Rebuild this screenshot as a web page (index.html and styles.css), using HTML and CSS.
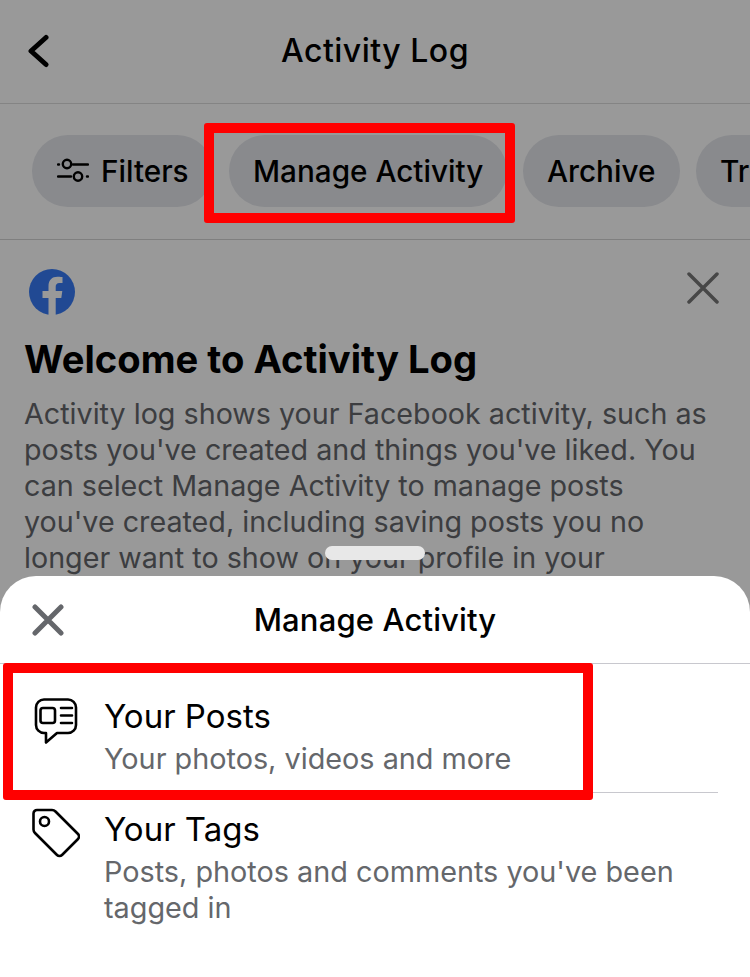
FILE: index.html
```html
<!DOCTYPE html>
<html lang="en">
<head>
<meta charset="utf-8">
<title>Activity Log</title>
<link rel="stylesheet" href="styles.css">
</head>
<body>
<div class="page">
  <header class="topbar">
    <svg class="back" width="26" height="34" viewBox="0 0 26 34"><path d="M21 3.500 L6 17 L21 30.500" fill="none" stroke="#000" stroke-width="5" stroke-linecap="round" stroke-linejoin="round"/></svg>
    <h1 class="topbar-title">Activity Log</h1>
  </header>
  <nav class="chips">
    <span class="chip chip-filters">
      <svg class="filter-icon" width="32" height="25" viewBox="0 0 32 25"><g fill="none" stroke="#000" stroke-width="2.400" stroke-linecap="round"><path d="M1 6.500h1M16 6.500h15M1 18.500h13M30 18.500h1"/><circle cx="10" cy="6" r="4.200"/><circle cx="21" cy="18.500" r="4.200"/></g></svg>
      Filters
    </span>
    <span class="chip chip-manage">Manage Activity</span>
    <span class="chip chip-archive">Archive</span>
    <span class="chip chip-trash">Tr</span>
  </nav>
  <section class="welcome">
    <div class="welcome-top">
      <svg width="46" height="46" viewBox="0 0 46 46"><circle cx="23" cy="23" r="23" fill="#377bf6"/><path d="M19.500 46V29h-6v-7h6v-5c0-6 3.500-9.300 9-9.300 2.600 0 5 .4 5 .4v6h-3c-2.900 0-3.800 1.800-3.800 3.700V22h6.600l-1 7h-5.600v17z" fill="#fff"/></svg>
      <svg class="welcome-x" width="32" height="32" viewBox="0 0 32 32"><path d="M2 2L30 30M30 2L2 30" stroke="#777" stroke-width="3.500" stroke-linecap="round"/></svg>
    </div>
    <h2 class="welcome-title">Welcome to Activity Log</h2>
    <p class="welcome-text">Activity log shows your Facebook activity, such as posts you've created and things you've liked. You can select Manage Activity to manage posts you've created, including saving posts you no longer want to show on your profile in your</p>
  </section>
  <div class="scrim"></div>
  <div class="handle"></div>
  <section class="sheet">
    <div class="sheet-head">
      <svg class="sheet-x" width="32" height="32" viewBox="0 0 32 32"><path d="M3 3L29 29M29 3L3 29" stroke="#65676b" stroke-width="5" stroke-linecap="round"/></svg>
      <h2 class="sheet-title">Manage Activity</h2>
    </div>
    <div class="row row-first">
      <svg class="row-icon" width="46" height="46" viewBox="0 0 46 46"><g fill="none" stroke="#000" stroke-width="2.600" stroke-linejoin="round" stroke-linecap="round"><path d="M10 1.500h24a8 8 0 0 1 8 8v17.500a8 8 0 0 1-8 8H23L12 44.500V35h-2a8 8 0 0 1-8-8V9.500a8 8 0 0 1 8-8z"/><rect x="6.500" y="10" width="14.500" height="15" rx="2.500"/><path d="M27 10h11M27 17.500h11M27 25h11"/></g></svg>
      <div class="row-body row-body-line">
        <div class="row-title">Your Posts</div>
        <div class="row-sub">Your photos, videos and more</div>
      </div>
    </div>
    <div class="row">
      <svg class="row-icon row-icon-tag" width="48" height="50" viewBox="0 0 48 50"><g fill="none" stroke="#000" stroke-width="2.600" stroke-linejoin="round"><path d="M5 2h15a5 5 0 0 1 3.500 1.500L46 26a3.500 3.500 0 0 1 0 5L30 47a3.500 3.500 0 0 1-5 0L3 25a5 5 0 0 1-1.500-3.500V5.500A3.500 3.500 0 0 1 5 2z"/><circle cx="12.500" cy="13.500" r="4.500"/></g></svg>
      <div class="row-body">
        <div class="row-title">Your Tags</div>
        <div class="row-sub">Posts, photos and comments you've been tagged in</div>
      </div>
    </div>
  </section>
  <div class="mark mark-chip"></div>
  <div class="mark mark-row"></div>
</div>
</body>
</html>
```
FILE: styles.css
```css
* { box-sizing: border-box; }
html, body { margin: 0; padding: 0; }
body { font-family: Inter, "Noto Sans", sans-serif; color: #000; background: #fff; }
.page { position: relative; width: 750px; height: 977px; overflow: hidden; background: #fff; }
h1, h2, p { margin: 0; }

.topbar { height: 104px; padding-bottom: 2px; border-bottom: 1px solid #dcdcdc; display: flex; align-items: center; justify-content: center; position: relative; }
.back { position: absolute; left: 25px; top: 34px; }
.topbar-title { font-size: 32px; font-weight: 500; letter-spacing: .5px; }

.chips { height: 136px; padding-bottom: 2px; border-bottom: 1px solid #d4d4d4; display: flex; align-items: center; gap: 16px; padding-left: 32px; overflow: hidden; white-space: nowrap; }
.chip { height: 72px; border-radius: 36px; background: #e4e6eb; display: flex; align-items: center; font-size: 29.700px; font-weight: 500; padding: 0 24px; flex: none; }
.chip-filters { gap: 12px; width: 181px; padding-left: 25px; }
.chip-manage { width: 278px; }
.chip-archive { width: 157px; }
.chip-trash { width: 54px; padding-right: 0; border-radius: 36px 0 0 36px; }
.filter-icon { flex: none; }

.welcome { padding: 29px 31px 0 24px; }
.welcome-top { display: flex; justify-content: space-between; align-items: flex-start; padding-left: 5px; }
.welcome-x { margin-top: 3px; }
.welcome-title { font-size: 38.200px; font-weight: 700; margin-top: 21px; line-height: 46px; white-space: nowrap; }
.welcome-text { font-size: 28.700px; line-height: 36px; color: #65676b; margin-top: 14px; }

.scrim { position: absolute; inset: 0; background: rgba(0, 0, 0, .4); }
.handle { position: absolute; left: 325px; top: 546px; width: 100px; height: 14px; border-radius: 7px; background: #e8e8e8; }

.sheet { position: absolute; left: 0; right: 0; top: 576px; bottom: 0; background: #fff; border-radius: 36px 36px 0 0; }
.sheet-head { height: 88px; border-bottom: 1px solid #c8c8ce; display: flex; align-items: center; justify-content: center; position: relative; }
.sheet-x { position: absolute; left: 32px; top: 28px; }
.sheet-title { font-size: 31px; font-weight: 500; letter-spacing: .15px; }

.row { display: flex; padding-left: 32px; padding-top: 18px; }
.row-first { padding-top: 34px; }
.row-icon { flex: none; margin-right: 24px; }
.row-first .row-icon { margin-left: 2px; }
.row-icon-tag { margin-top: -3px; }
.row-body { flex: 1; padding-right: 32px; }
.row-body-line { border-bottom: 1px solid #c8c8ce; height: 95px; margin-right: 32px; padding-right: 0; }
.row-title { font-size: 33px; line-height: 38px; margin-top: -1px; }
.row-sub { font-size: 28.800px; line-height: 36px; color: #65676b; margin-top: 6px; }

.mark { position: absolute; border: 10px solid #f00; border-radius: 3px; }
.mark-chip { left: 204px; top: 123px; width: 311px; height: 100px; }
.mark-row { left: 3px; top: 663px; width: 590px; height: 137px; }
```
